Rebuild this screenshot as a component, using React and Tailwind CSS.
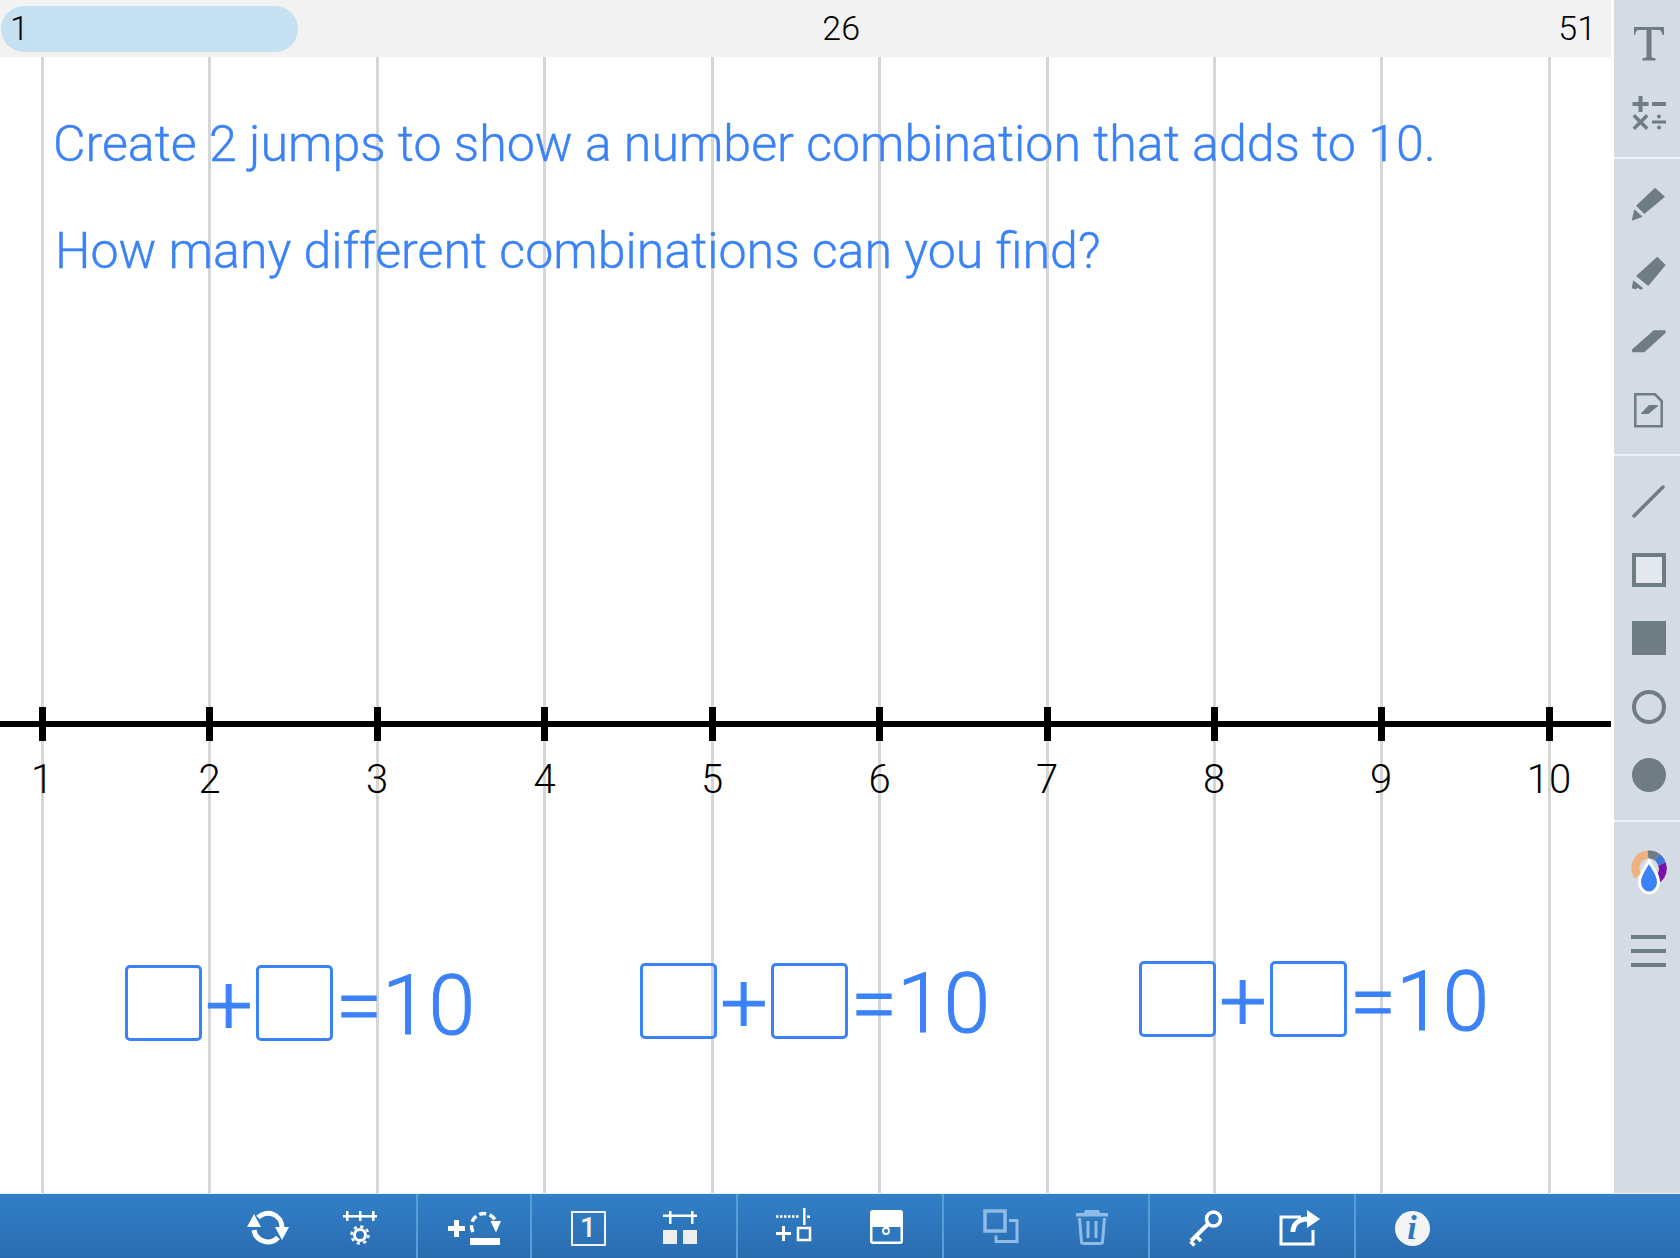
const TICKS = [42, 209.5, 377, 544.5, 712, 879.5, 1047, 1214, 1381, 1549]
const LABELS = ['1', '2', '3', '4', '5', '6', '7', '8', '9', '10']
const FONT = "font-['Roboto',sans-serif]"

// sidebar icons, 40x40 and centred on the button
const GRAY = '#6f7c84'

function Icon({ children }) {
  return (
    <svg width="40" height="40" viewBox="0 0 40 40" fill={GRAY}>
      {children}
    </svg>
  )
}

function SideItem({ children }) {
  return <button className="flex h-[68.5px] w-full items-center justify-center pl-[3px]">{children}</button>
}

function SideSep() {
  return <div className="h-[2px] bg-[#eef1f5]" />
}

function SideBar() {
  return (
    <aside className="flex w-[66px] flex-col bg-[#d5dbe5]">
      <div className="pt-[10px] pb-[10px]">
        <SideItem>
          <Icon>
            <path d="M5 3h30v8h-1.500c-.5-3-1.500-5-4-5H22.500v26c0 1.500 1 2 4 2v2.500h-13V34c3 0 4-.5 4-2V6H10c-2.500 0-3.500 2-4 5H5z" />
          </Icon>
        </SideItem>
        <SideItem>
          <Icon>
            <path d="M9.500 3h4v6h6v4h-6v6h-4v-6h-6V9h6zM23 9h14v4H23zM6 21l5.500 5.500L17 21l2.500 2.500L14 29l5.500 5.500L17 37l-5.500-5.500L6 37l-2.500-2.500L9 29l-5.500-5.500zM23 27.500h14v3H23z" />
            <circle cx="30" cy="23.500" r="2" />
            <circle cx="30" cy="34.500" r="2" />
          </Icon>
        </SideItem>
      </div>
      <SideSep />
      <div className="pt-[11px] pb-[10px]">
        <SideItem>
          <Icon>
            <path d="M26 3.700l10 9L15.300 30 7 21.700zM2.700 36.700l2.600-11.400 8.400 7.400z" />
          </Icon>
        </SideItem>
        <SideItem>
          <Icon>
            <path d="M28.300 3.700l8.400 8.300L19.300 33 7 23zM2.700 35.300l1.600-8 10 8-3 1.500-2.500-2-2 1.500z" />
          </Icon>
        </SideItem>
        <SideItem>
          <Icon>
            <path d="M25 10h11l-.5 2L15 30.500H4l-.5-1.500z" stroke={GRAY} strokeWidth="1.500" strokeLinejoin="round" />
          </Icon>
        </SideItem>
        <SideItem>
          <Icon>
            <path d="M6.300 4.300H26l6.700 6.700v25.300H6.300z" fill="none" stroke={GRAY} strokeWidth="2.500" />
            <path d="M20 15h9l-.5 1.500-9 7.500h-7l-.5-.800z" />
          </Icon>
        </SideItem>
      </div>
      <SideSep />
      <div className="pt-[11px] pb-[10px]">
        <SideItem>
          <Icon>
            <path d="M34 6L5 35" stroke={GRAY} strokeWidth="3.500" strokeLinecap="round" />
          </Icon>
        </SideItem>
        <SideItem>
          <Icon>
            <rect x="5" y="5" width="30" height="30" fill="#e3e7ee" stroke={GRAY} strokeWidth="4" />
          </Icon>
        </SideItem>
        <SideItem>
          <Icon>
            <rect x="3" y="3" width="34" height="34" />
          </Icon>
        </SideItem>
        <SideItem>
          <Icon>
            <circle cx="20" cy="20" r="15" fill="none" stroke={GRAY} strokeWidth="4" />
          </Icon>
        </SideItem>
        <SideItem>
          <Icon>
            <circle cx="20" cy="20" r="17" />
          </Icon>
        </SideItem>
      </div>
      <SideSep />
      <div className="pt-[17px]">
        <SideItem>
          <svg width="40" height="52" viewBox="0 0 40 52" fill="none">
            <path d="M9 29A13.500 13.500 0 0 1 19 7.500" stroke="#edb07e" strokeWidth="8" />
            <path d="M19 7.500A13.500 13.500 0 0 1 28 10" stroke="#6f7c84" strokeWidth="8" />
            <path d="M28 10A13.500 13.500 0 0 1 33 17" stroke="#3f78d8" strokeWidth="8" />
            <path d="M33 17A13.500 13.500 0 0 1 29 32" stroke="#7a12a8" strokeWidth="8" />
            <path d="M20 14C23 20 29.500 27 29.500 35a9.500 11 0 0 1-19 0C10.500 27 17 20 20 14z" fill="#3b82f6" stroke="#fff" strokeWidth="3" />
          </svg>
        </SideItem>
        <div className="mt-[28px] flex flex-col items-center gap-[10px] pl-[3px]">
          <div className="h-[4px] w-[35px] bg-[#6f7c84]" />
          <div className="h-[4px] w-[35px] bg-[#6f7c84]" />
          <div className="h-[4px] w-[35px] bg-[#6f7c84]" />
        </div>
      </div>
    </aside>
  )
}

const TOOL_DIM = '#8fbce6'

function Tool({ children }) {
  return (
    <button className="flex h-full w-[92px] items-center justify-center pt-[4px]">
      <svg width="56" height="48" viewBox="0 0 56 48" fill="#fff">
        {children}
      </svg>
    </button>
  )
}

function Group({ children, last }) {
  return (
    <div className={`flex h-full justify-center px-[10px] ${last ? '' : 'border-r-2 border-[#5a9ed8]'}`}>
      {children}
    </div>
  )
}

function BottomBar() {
  return (
    <footer className="flex h-[65px] justify-center border-t border-[#e6edf5] bg-gradient-to-b from-[#3180c8] to-[#2b6cb0]">
      <Group>
        <Tool>
          <path d="M18 13.500A14 14 0 0 1 42 23M14 26A14 14 0 0 0 38 33.500" fill="none" stroke="#fff" strokeWidth="5" />
          <path d="M7 23h14l-7-13zM35 23h14l-7 13z" />
        </Tool>
        <Tool>
          <path d="M11 11h34v2.500H11zM14 7h2.500v10H14zM27 7h2.500v10H27zM40 7h2.500v10H40z" />
          <circle cx="28" cy="31" r="5.500" fill="none" stroke="#fff" strokeWidth="3" />
          <circle cx="28" cy="31" r="8.500" fill="none" stroke="#fff" strokeWidth="2.500" strokeDasharray="3.200 3.470" />
        </Tool>
      </Group>
      <Group>
        <Tool>
          <path d="M2 22h6v-6h5v6h6v5h-6v6H8v-6H2z" />
          <path d="M27 28A12.500 12.500 0 0 1 49 16" fill="none" stroke="#fff" strokeWidth="3.500" strokeDasharray="7 3.500" />
          <path d="M44.500 17h10.500l-5 11.500z" />
          <path d="M24 34h30v7H24z" />
        </Tool>
      </Group>
      <Group>
        <button className="flex h-full w-[92px] items-center justify-center pt-[4px]">
          <div className={`flex h-[35px] w-[35px] items-center justify-center border-2 border-[#f2f2f2] text-[28px] leading-none font-medium text-[#f2f2f2] ${FONT}`}>
            1
          </div>
        </button>
        <Tool>
          <path d="M11 10.500h34V13H11zM17 7h2.500v13H17zM39 7h2.500v13H39z" />
          <path d="M11 26h14v14H11zM31 26h14v14H31z" fill="#eeeeee" />
        </Tool>
      </Group>
      <Group>
        <Tool>
          <path d="M10 12.500h24" fill="none" stroke="#fff" strokeWidth="2.500" strokeDasharray="2.500 1.500" />
          <path d="M37 4h2.500v17H37zM41 11.500h3v2.500h-3z" />
          <path d="M10 28h15v3H10zM16 22h3v15h-3z" />
          <rect x="32" y="24" width="12" height="12" fill="none" stroke="#fff" strokeWidth="2.500" />
        </Tool>
        <Tool>
          <rect x="12" y="6" width="33" height="34" rx="3" fill="#fff" />
          <path d="M14.500 23h11a3.500 3.500 0 0 0 6 0h11v14.500h-28z" fill="#2f78bf" />
          <circle cx="28" cy="27" r="3" fill="#2f78bf" stroke="#fff" strokeWidth="1.800" />
        </Tool>
      </Group>
      <Group>
        <Tool>
          <rect x="13" y="7" width="20" height="20" fill="none" stroke={TOOL_DIM} strokeWidth="3.500" />
          <path d="M37 16.500h8v21H24v-6" fill="none" stroke={TOOL_DIM} strokeWidth="3" />
        </Tool>
        <Tool>
          <path d="M12 9h8l1-3h14l1 3h8v3.500H12z" fill={TOOL_DIM} />
          <path d="M15.500 14l2 24c0 .8.500 1.500 2 1.500h17c1.500 0 2-.7 2-1.500l2-24" fill="none" stroke={TOOL_DIM} strokeWidth="3" />
          <path d="M24 17v17M32 17v17" stroke={TOOL_DIM} strokeWidth="3" />
        </Tool>
      </Group>
      <Group>
        <Tool>
          <circle cx="35.500" cy="15" r="7" fill="none" stroke="#fff" strokeWidth="3.500" />
          <path d="M30 20L13 37" stroke="#fff" strokeWidth="4" />
          <path d="M18 32l5 5M12.500 37.500l4 4" stroke="#fff" strokeWidth="3.500" />
        </Tool>
        <Tool>
          <path d="M31 13H11v27h32V26" fill="none" stroke="#fff" strokeWidth="3" />
          <path d="M23 28c0-9 7-13 15-13" fill="none" stroke="#fff" strokeWidth="5" />
          <path d="M37 6l13 9-13 9z" />
        </Tool>
      </Group>
      <Group last>
        <button className="flex h-full w-[92px] items-center justify-center pt-[4px]">
          <div className="flex h-[35px] w-[35px] items-center justify-center rounded-full bg-[#f4f4f4] font-['Liberation_Serif',serif] text-[34px] leading-none font-bold text-[#2f78bf] italic">
            i
          </div>
        </button>
      </Group>
    </footer>
  )
}

function Equation({ x, y }) {
  return (
    <div
      className={`absolute flex items-center text-[84px] leading-[76px] font-light text-[#3b82f6] [-webkit-text-stroke:1px_#3b82f6] ${FONT}`}
      style={{ left: x, top: y }}
    >
      <div className="h-[76px] w-[77px] rounded-[5px] border-[3px] border-[#3b82f6]" />
      <span className="flex w-[54px] translate-y-[3px] justify-center">+</span>
      <div className="h-[76px] w-[77px] rounded-[5px] border-[3px] border-[#3b82f6]" />
      <span className="flex w-[52px] translate-y-[3px] justify-center">=</span>
      <span className="-ml-[3px] translate-y-[3px]">10</span>
    </div>
  )
}

function Canvas() {
  return (
    <div className="relative flex-1 overflow-hidden bg-white">
      {TICKS.map((x) => (
        <div key={x} className="absolute top-0 bottom-0 w-[3px] bg-[#d6d6d6]" style={{ left: x - 1.5 }} />
      ))}

      <p className={`absolute top-[57px] left-[53px] text-[50.12px] leading-[60px] font-light whitespace-nowrap text-[#3b82f6] [-webkit-text-stroke:0.4px_#3b82f6] ${FONT}`}>
        Create 2 jumps to show a number combination that adds to 10.
      </p>
      <p className={`absolute top-[164px] left-[55px] text-[50.12px] leading-[60px] font-light whitespace-nowrap text-[#3b82f6] [-webkit-text-stroke:0.4px_#3b82f6] ${FONT}`}>
        How many different combinations can you find?
      </p>

      {/* number line */}
      <div className="absolute top-[663.500px] right-0 left-0 h-[6px] bg-black" />
      {TICKS.map((x, i) => (
        <div key={i}>
          <div className="absolute top-[650px] h-[34px] w-[7px] bg-black" style={{ left: x - 3.5 }} />
          <span
            className={`absolute top-[698px] w-[60px] text-center text-[40px] leading-[50px] font-light text-black ${FONT}`}
            style={{ left: x - 30 }}
          >
            {LABELS[i]}
          </span>
        </div>
      ))}

      <Equation x={125} y={908} />
      <Equation x={640} y={906} />
      <Equation x={1139} y={904} />
    </div>
  )
}

export default function App() {
  return (
    <div className="flex h-screen w-full flex-col overflow-hidden bg-white">
      <div className="flex min-h-0 flex-1">
        <main className="flex flex-1 flex-col pr-[3px]">
          <div className={`flex h-[57px] items-center justify-between bg-[#f2f2f2] text-[34px] font-light text-black ${FONT}`}>
            <div className="ml-[1px] flex h-[46px] w-[297px] items-center rounded-full bg-[#c5e0f0] pl-[9px]">1</div>
            <span className="-ml-[174px]">26</span>
            <span className="pr-[15px]">51</span>
          </div>
          <Canvas />
        </main>
        <SideBar />
      </div>
      <BottomBar />
    </div>
  )
}
